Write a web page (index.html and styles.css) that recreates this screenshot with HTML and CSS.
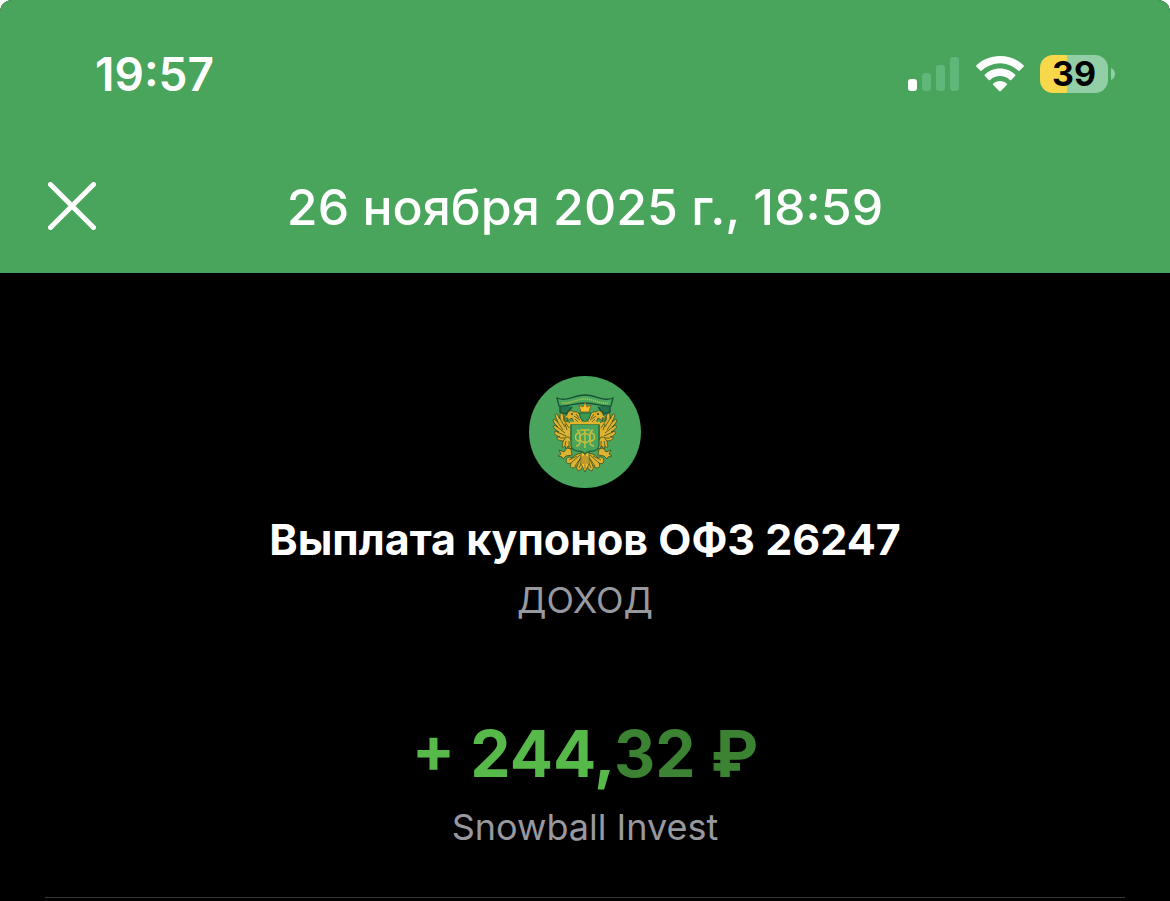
FILE: index.html
```html
<!DOCTYPE html>
<html lang="ru">
<head>
<meta charset="utf-8">
<meta name="viewport" content="width=device-width, initial-scale=1">
<title>Выплата купонов ОФЗ 26247</title>
<link rel="stylesheet" href="styles.css">
</head>
<body>
<div class="screen">
  <header class="header">
    <div class="status">
      <time class="clock">19:57</time>
      <div class="indicators">
        <svg class="signal" viewBox="0 0 52 36" aria-hidden="true">
          <rect x="0" y="23" width="9" height="12" rx="3" fill="#fff"/>
          <g fill="#5fb87a">
            <rect x="14" y="17" width="9" height="18" rx="3"/>
            <rect x="28" y="9" width="9" height="26" rx="3"/>
            <rect x="42" y="1" width="9" height="34" rx="3"/>
          </g>
        </svg>
        <svg class="wifi" viewBox="0 0 48 36" aria-hidden="true" fill="#fff">
          <path d="M24 0C14.800 0 6.500 3.500.500 9.200Q-.300 10 .500 10.800L4.200 14.500Q5 15.300 5.800 14.500A26.500 26.500 0 0 1 42.200 14.500Q43 15.300 43.800 14.500L47.500 10.800Q48.300 10 47.500 9.200C41.500 3.500 33.200 0 24 0Z"/>
          <path d="M24 12.500C18 12.500 12.800 14.800 8.900 18.500Q8.100 19.300 8.900 20.100L12.700 23.900Q13.400 24.500 14.200 23.900A14.600 14.600 0 0 1 33.800 23.900Q34.600 24.500 35.300 23.900L39.100 20.100Q39.900 19.300 39.100 18.500C35.200 14.800 30 12.500 24 12.500Z"/>
          <path d="M24 25C21.300 25 19 26 17.300 27.500Q16.400 28.300 17.300 29.100L23.200 35Q24 35.700 24.800 35L30.700 29.100Q31.600 28.300 30.700 27.500C29 26 26.700 25 24 25Z"/>
        </svg>
        <div class="battery"><span class="battery-level">39</span><svg class="battery-tip" viewBox="0 0 4 12" aria-hidden="true"><path d="M0 0C2.500 1 4 3.500 4 6S2.500 11 0 12Z" fill="#92cfa6"/></svg></div>
      </div>
    </div>
    <div class="titlebar">
      <button class="close" type="button" aria-label="Закрыть">
        <svg viewBox="0 0 48 48" aria-hidden="true"><path d="M2.500 2.500l43 43M45.500 2.500l-43 43" stroke="#fff" stroke-width="5" stroke-linecap="round"/></svg>
      </button>
      <h1 class="date">26 ноября 2025 г., 18:59</h1>
    </div>
  </header>
  <main class="payment">
    <svg class="emblem" viewBox="0 0 112 112" aria-hidden="true">
      <defs>
        <g id="wing" stroke="#3c4f22" stroke-width=".8" stroke-linejoin="round">
          <path fill="#dfb32f" d="M45 46C41 48 39 45 36 45L34 38Q31 36 31 40L31 43L28 38Q25 37 27 42L29 46L25 43Q23 44 26 48L29 51L25 49Q23 51 27 54L30 56L26 55Q24 57 28 60L31 61L28 61Q27 64 33 65L42 64V50Z"/>
          <path fill="none" d="M30 41L36 51M28 45L34 54M27 50L36 57M28 56L37 60M34 43L40 52M31 62L40 62M36 48L38 54"/>
          <path fill="#dfb32f" d="M53 48V43C51 38 49 35 45 36C42 33 38 36 38 39L34 42L39 42L38 45L43 42L45 47Z"/>
          <circle cx="43" cy="38" r="1" fill="#24482b" stroke="none"/>
          <path fill="none" d="M45 40L51 44M47 38L50 42M46 43L50 47"/>
          <path fill="#dfb32f" d="M37 61Q33 65 33 71Q35 72 36 70L37 73L39 70L42 73L44 70Q43 64 40 61Z"/>
          <path fill="none" d="M37 65L36 70M40 65V71"/>
          <path fill="#dfb32f" d="M38 72L35 76L30 74L32 78L29 80L33 81L34 83L37 80L43 79L42 73Z"/>
          <path fill="#dfb32f" d="M55 77Q47 77 43 82Q38 79 37 85Q38 89 42 87Q40 92 44 92Q48 91 50 87L55 80Z"/>
          <path fill="#dfb32f" d="M55 79Q50 83 49 88Q46 92 49 95Q53 94 54 90Z"/>
          <path fill="none" d="M51 79L42 87M53 80L46 90M48 80L40 84M54 83L50 92"/>
        </g>
      </defs>
      <circle cx="56" cy="56" r="56" fill="#49a45c"/>
      <path d="M31 28L31 36L37 38L43 31M81 28L81 36L75 38L69 31" fill="#26754b" stroke="#194f36" stroke-width="1.300"/>
      <path d="M28 22C38 26 45 19 56 19S74 26 84 22L82 30C72 31 67 27 56 27S40 31 30 30Z" fill="#48a85d" stroke="#194f36" stroke-width="1.300"/>
      <path d="M33 27C42 28 47 23 56 23S70 28 79 27" fill="none" stroke="#b9bd45" stroke-width="1.400" stroke-dasharray="1.400 .7"/>
      <use href="#wing"/>
      <use href="#wing" transform="translate(112 0) scale(-1 1)"/>
      <path d="M52 36L50 29L54 31L56 26L58 31L62 29L60 36Z" fill="#f0bf2b" stroke="#795b21" stroke-width=".8"/>
      <path d="M50 37H62L60 43L56 46L52 43Z" fill="#3b9954" stroke="#24643a"/>
      <path d="M52 77Q56 73 60 77L60 88L56 96L52 88Z" fill="#edbe31" stroke="#3c4f22" stroke-width=".8"/>
      <path d="M56 77V93M54 80V88M58 80V88" stroke="#795b21" stroke-width=".7"/>
      <path d="M42 48H70V69Q70 74 64 75Q59 75 56 78Q53 75 48 75Q42 74 42 69Z" fill="#49a45c" stroke="#24643a" stroke-width="1.300"/>
      <path d="M41 47H71" stroke="#e3b52c" stroke-width="2.500"/>
      <g fill="none" stroke="#cdbf3b" stroke-width="1.400">
        <path d="M56 54V72M51 54H61M48 54Q51 55 51 60V67Q50 70 47 70M64 54Q61 55 61 60V67Q62 70 65 70"/>
        <path d="M51 57C45 56 45 66 51 65M61 57C67 56 67 66 61 65"/>
        <ellipse cx="56" cy="62" rx="5" ry="4.500"/>
      </g>
    </svg>
    <h2 class="name">Выплата купонов ОФЗ 26247</h2>
    <p class="kind">ДОХОД</p>
    <p class="amount">+ 244,<span class="fraction">32 ₽</span></p>
    <p class="account">Snowball Invest</p>
    <hr class="divider">
  </main>
</div>
</body>
</html>
```
FILE: styles.css
```css
* { box-sizing: border-box; }

html { background: #fff; }

body {
  margin: 0;
  font-family: Inter, "Liberation Sans", sans-serif;
  color: #fff;
}

.screen {
  display: flex;
  flex-direction: column;
  min-height: 100vh;
  background: #000;
  border-radius: 12px 12px 0 0;
  overflow: hidden;
}

.header {
  padding: 45px 48px 34px;
  background: #49a45c;
}

.status {
  display: flex;
  align-items: center;
  justify-content: space-between;
  padding: 0 7px 0 47px;
}

.clock {
  font-size: 46px;
  font-weight: 600;
  line-height: 58px;
}

.indicators {
  display: flex;
  align-items: center;
  gap: 16px;
}

.signal { width: 52px; height: 36px; }
.wifi { width: 48px; height: 36px; }

.battery {
  display: flex;
  align-items: center;
  gap: 3px;
}

.battery-level {
  width: 68px;
  border-radius: 13px;
  background: linear-gradient(90deg, #f6d84a 39%, #92cfa6 39%);
  color: #000;
  font-size: 34px;
  font-weight: 700;
  line-height: 38px;
  text-align: center;
}

.battery-tip { width: 4px; height: 12px; }

.titlebar {
  display: grid;
  grid-template-columns: 48px 1fr 48px;
  align-items: start;
  margin-top: 73px;
}

.close {
  width: 48px;
  height: 48px;
  margin-top: 6px;
  padding: 0;
  border: 0;
  background: none;
  cursor: pointer;
}

.close svg { display: block; }

.date {
  margin: 0;
  font-size: 50px;
  font-weight: 500;
  line-height: 63px;
  text-align: center;
}

.payment {
  display: flex;
  flex-direction: column;
  align-items: center;
  padding: 103px 45px 0;
  text-align: center;
}

.emblem { width: 112px; height: 112px; }

.name {
  margin: 24px 0 0;
  font-size: 43px;
  font-weight: 700;
  line-height: 54px;
}

.kind,
.account {
  margin: 0;
  color: #98989f;
  font-size: 36px;
  line-height: 48px;
}

.kind { margin-top: 10px; }

.amount {
  margin: 90px 0 0;
  color: #56b949;
  font-size: 64px;
  font-weight: 700;
  line-height: 80px;
}

.fraction { color: #3c8233; }

.account { margin-top: 9px; }

.divider {
  width: 100%;
  margin: 46px 0 0;
  border: 0;
  border-top: 1px solid #38383a;
}
```
